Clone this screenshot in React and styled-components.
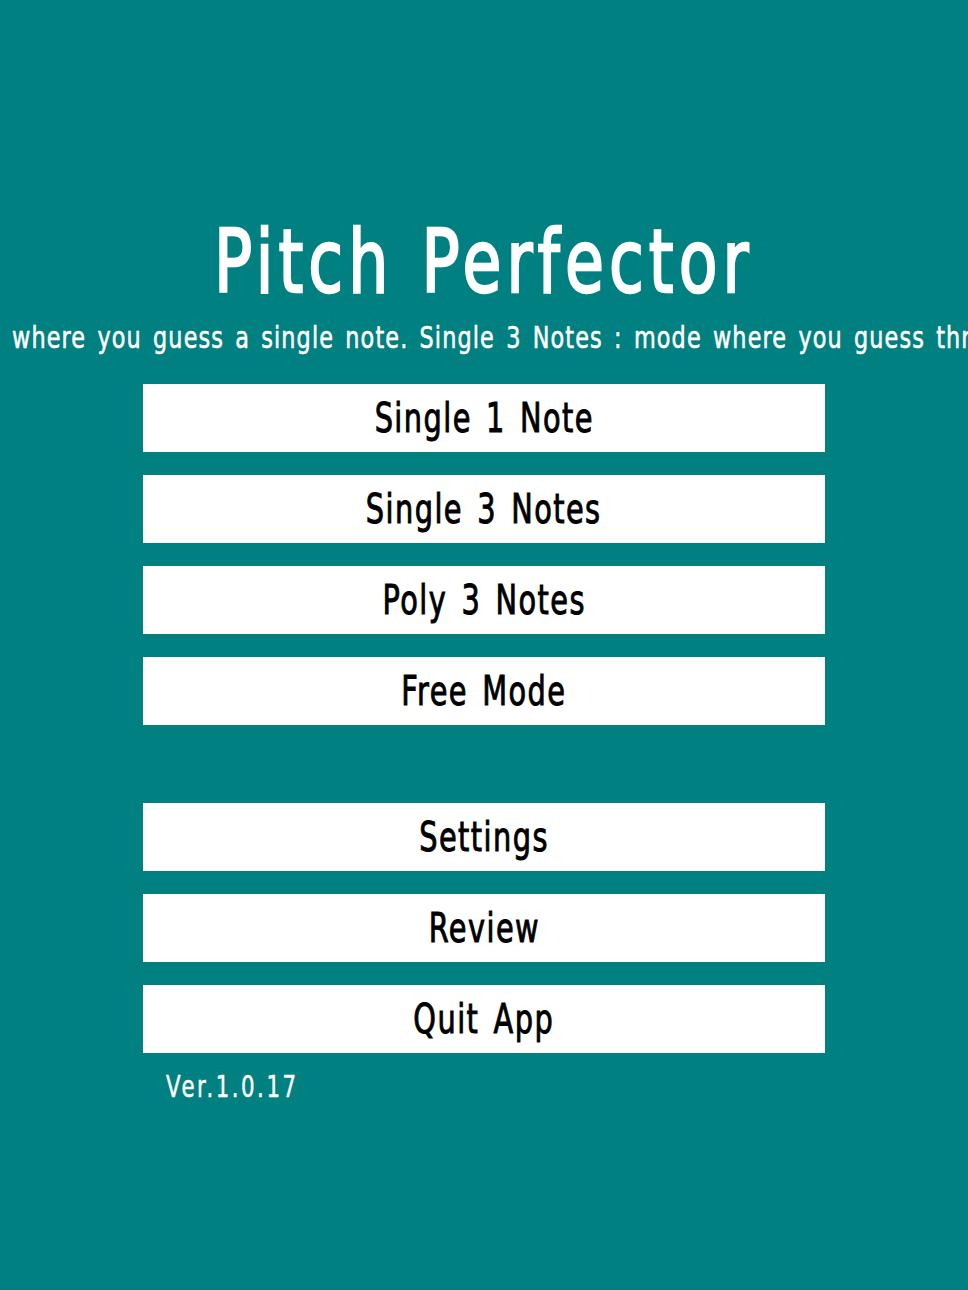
import React from "react";
import styled, { createGlobalStyle } from "styled-components";

const Global = createGlobalStyle`
  html, body { margin: 0; padding: 0; background: #008080; }
  body { font-family: "DejaVu Sans", "Liberation Sans", sans-serif; }
`;

const Screen = styled.div`
  width: 968px;
  height: 1290px;
  background: #008080;
  display: flex;
  flex-direction: column;
  align-items: center;
  overflow: hidden;
  padding-top: 218px;
  box-sizing: border-box;
`;

const Narrow = styled.span`
  display: inline-block;
  white-space: nowrap;
  transform: scaleX(${(p) => p.$sx || 0.72});
  transform-origin: ${(p) => p.$origin || "center"};
`;

const Title = styled.h1`
  margin: 0;
  font-size: 88px;
  line-height: 88px;
  font-weight: normal;
  color: #fff;
  letter-spacing: 7px;
  word-spacing: 4px;
  -webkit-text-stroke: 2.5px #fff;
`;

const Ticker = styled.div`
  width: 100%;
  overflow: hidden;
  white-space: nowrap;
  color: #fff;
  font-size: 30px;
  line-height: 36px;
  margin-top: 14px;
  padding-left: 12px;
  box-sizing: border-box;
  letter-spacing: 1.5px;
  word-spacing: 4px;
  -webkit-text-stroke: 0.6px #fff;
`;

const Menu = styled.div`
  display: flex;
  flex-direction: column;
  gap: 23px;
  margin-top: 28px;
`;

const Group = styled.div`
  display: flex;
  flex-direction: column;
  gap: 23px;
  margin-top: ${(p) => (p.$spaced ? "55px" : "0")};
`;

const MenuButton = styled.button`
  width: 682px;
  height: 68px;
  border: none;
  border-radius: 0;
  background: #fff;
  color: #000;
  font-family: inherit;
  font-size: 40px;
  letter-spacing: 2px;
  word-spacing: 5px;
  padding: 0;
  cursor: pointer;
  -webkit-text-stroke: 1px #000;
`;

const Version = styled.div`
  align-self: flex-start;
  color: #fff;
  font-size: 30px;
  line-height: 36px;
  letter-spacing: 3.5px;
  margin-top: 16px;
  padding-left: 23px;
  -webkit-text-stroke: 0.5px #fff;
`;

const MenuColumn = styled.div`
  display: flex;
  flex-direction: column;
`;

const items = ["Single 1 Note", "Single 3 Notes", "Poly 3 Notes", "Free Mode"];
const system = ["Settings", "Review", "Quit App"];

export default function App() {
  return (
    <>
      <Global />
      <Screen>
        <Title>
          <Narrow $sx={0.72}>Pitch Perfector</Narrow>
        </Title>
        <Ticker>
          <Narrow $sx={0.745} $origin="left">
            where you guess a single note. Single 3 Notes : mode where you guess three notes in a row. Poly 3 Notes : mode where you guess three notes at once.
          </Narrow>
        </Ticker>
        <MenuColumn>
          <Menu>
            <Group>
              {items.map((t) => (
                <MenuButton key={t}>
                  <Narrow $sx={0.72}>{t}</Narrow>
                </MenuButton>
              ))}
            </Group>
            <Group $spaced>
              {system.map((t) => (
                <MenuButton key={t}>
                  <Narrow $sx={0.72}>{t}</Narrow>
                </MenuButton>
              ))}
            </Group>
          </Menu>
          <Version>
            <Narrow $sx={0.712} $origin="left">Ver.1.0.17</Narrow>
          </Version>
        </MenuColumn>
      </Screen>
    </>
  );
}
